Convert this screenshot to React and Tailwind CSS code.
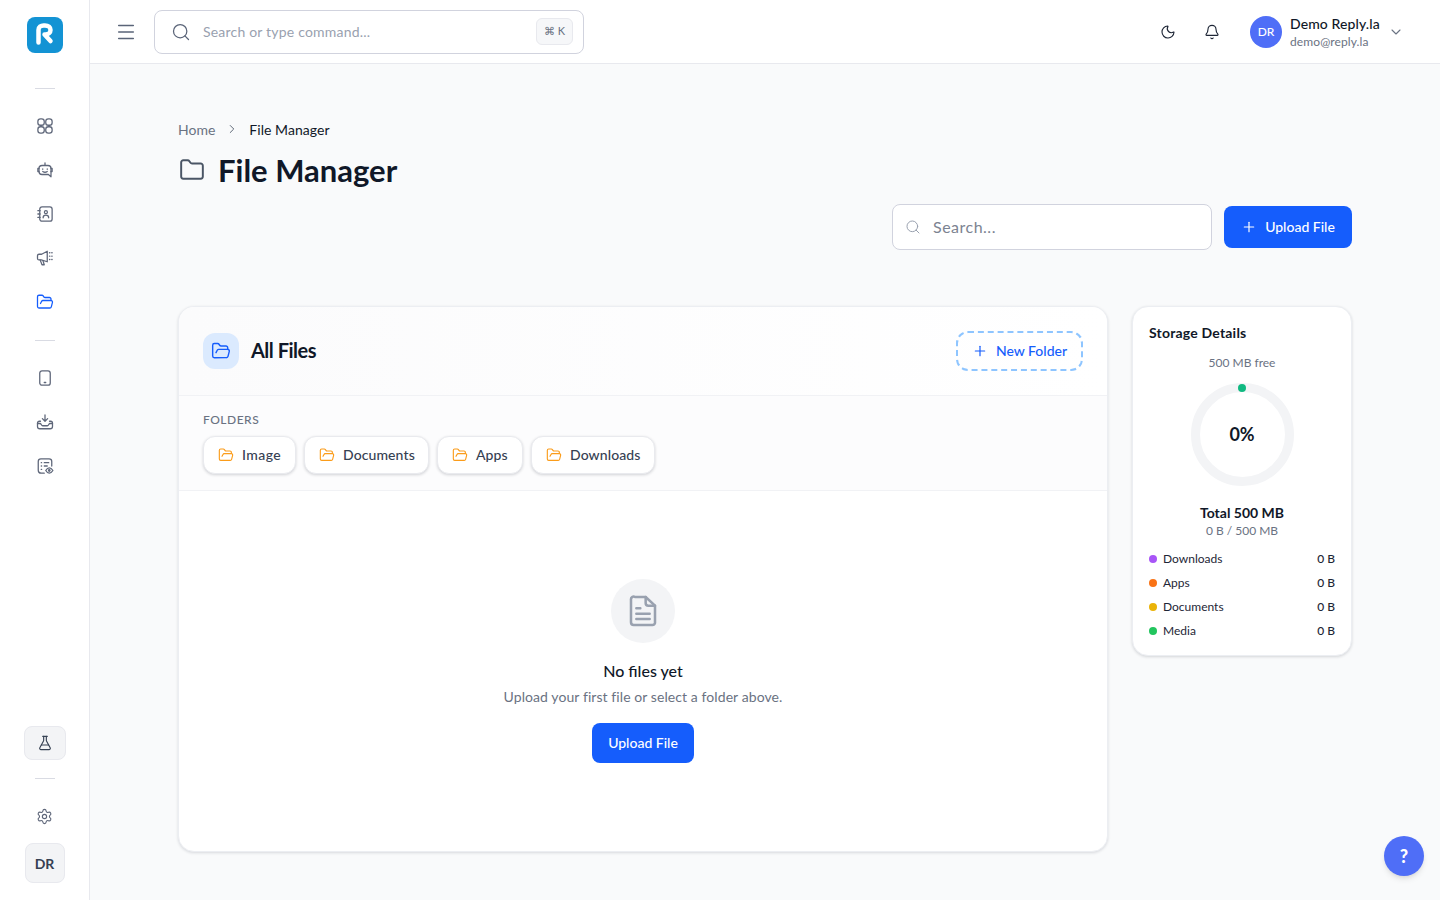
import React from "react";
import { Menu, Search, Moon, Bell, ChevronDown, ChevronRight, Folder, FolderOpen, Plus, FlaskConical, Settings } from "lucide-react";

const S = ({ children, className = "", size = 18, sw = 1.7 }) => (
  <svg width={size} height={size} viewBox="0 0 24 24" fill="none" stroke="currentColor" strokeWidth={sw} strokeLinecap="round" strokeLinejoin="round" className={className}>
    {children}
  </svg>
);

const GridIcon = () => (
  <S><rect x="2.500" y="2.500" width="8.500" height="8.500" rx="3.500" /><rect x="13" y="2.500" width="8.500" height="8.500" rx="3.500" /><rect x="2.500" y="13" width="8.500" height="8.500" rx="3.500" /><rect x="13" y="13" width="8.500" height="8.500" rx="3.500" /></S>
);
const BotIcon = () => (
  <S>
    <path d="M12 2.500v3" />
    <path d="M8 6h8a4 4 0 0 1 4 4v11l-3.500-3H8a4 4 0 0 1-4-4v-4a4 4 0 0 1 4-4Z" />
    <path d="M4 10H2.500v4H4M20 10h1.500v4H20" />
    <path d="M9 10.500v.5M15 10.500v.5M9 14c1.800 1.200 4.200 1.200 6 0" />
  </S>
);
const ContactIcon = () => (
  <S>
    <rect x="5" y="2.500" width="16.500" height="19" rx="3" />
    <path d="M2.500 7.500h3M2.500 12h3M2.500 16.500h3" />
    <circle cx="13.200" cy="9.500" r="2" />
    <path d="M9.500 17c0-2 1.500-3.500 3.700-3.500s3.700 1.500 3.700 3.500" />
  </S>
);
const MegaphoneIcon = () => (
  <S>
    <path d="M15 3v14L7 14.500H4a2 2 0 0 1-2-2v-3.500a2 2 0 0 1 2-2h3.500L15 3Z" />
    <path d="M5.500 14.500L8 21h3l-1.800-5.500" />
    <path d="M18 5h.5M21 5h.5M18 9.500h.5M21 9.500h.5M18 14h.5M21 14h.5" />
  </S>
);
const TabletIcon = () => (
  <S><rect x="5" y="2.500" width="14" height="19" rx="3" /><path d="M11 18h2" /></S>
);
const InboxDown = () => (
  <S>
    <path d="M12 2.500v8M8.500 7.500l3.500 3.500 3.500-3.500" />
    <path d="M6 11H4.500A2.500 2.500 0 0 0 2 13.500V18a3 3 0 0 0 3 3h14a3 3 0 0 0 3-3v-4.500A2.500 2.500 0 0 0 19.500 11H18" />
    <path d="M2 14h3.500c1.500 0 1.500 3 3.500 3h6c2 0 2-3 3.500-3H22" />
  </S>
);
const ListEye = () => (
  <S>
    <path d="M11 21.500H7a4 4 0 0 1-4-4V6a3.500 3.500 0 0 1 3.500-3.500h11A3.500 3.500 0 0 1 21 6v6" />
    <path d="M7 7.500h.5M7 12h.5M7 16.500h.5M11 7.500h6M11 12h4" />
    <path d="M13 18c1.500-2.500 3-3.500 4.700-3.500s3.300 1 4.800 3.500c-1.500 2.500-3 3.500-4.800 3.500S14.500 20.500 13 18Z" />
    <circle cx="17.700" cy="18" r="1" />
  </S>
);
const DocIcon = () => (
  <S size={32} sw={1.9}>
    <path d="M6 1.500h8l7 6.500v13a2 2 0 0 1-2 1.500H5a2 2 0 0 1-2-2v-17a2 2 0 0 1 3-2Z" />
    <path d="M14 1.500v4.500a2 2 0 0 0 2 2h5" />
    <path d="M7 10h3M7 14h10M7 18h10" />
  </S>
);

const NavItem = ({ children, active }) => (
  <div className={`h-11 w-full flex items-center justify-center ${active ? "text-[#155dfc]" : "text-[#5f677a]"}`}>{children}</div>
);
const Rule = () => <div className="w-5 h-px bg-[#d9dbe3]" />;
const T = ({ children }) => <span className="inline-block -translate-y-px">{children}</span>;

const FolderChip = ({ name, w, track = "tracking-[0.1px]" }) => (
  <button className={`h-[38px] ${w} pl-[14px] flex items-center gap-2 bg-white rounded-xl border border-[#e9eaee] shadow-[0_1px_3px_rgba(16,24,40,0.18)] text-[14px] font-medium ${track} text-[#364153]`}>
    <FolderOpen size={16} className="text-[#fb9c1a]" strokeWidth={1.7} />
    <T>{name}</T>
  </button>
);

const Legend = ({ color, name }) => (
  <div className="h-6 flex items-center justify-between text-[12px] text-[#1e2636]">
    <div className="flex items-center gap-[6px]">
      <span className={`w-2 h-2 rounded-full ${color}`} />
      <span>{name}</span>
    </div>
    <span className="font-medium">0 B</span>
  </div>
);

export default function App() {
  return (
    <div className="h-[900px] w-[1440px] overflow-hidden flex bg-[#f9fafb] text-[#101828] relative font-['Lato','Noto_Sans',sans-serif]">
      <aside className="w-[90px] shrink-0 bg-white border-r border-[#e8e9ee] flex flex-col items-center">
        <div className="h-[70px] flex items-start pt-[17px]">
          <svg width="36" height="36" viewBox="0 0 36 36">
            <rect width="36" height="36" rx="8" fill="#1393d4" />
            <path d="M11.500 25.500V13c0-3 2.500-4.500 5-4.500h1.500c3.500 0 5.500 2 5.500 4.500s-2 4.500-5 4.500h-1l6 6.500" fill="none" stroke="#fff" strokeWidth="4.500" strokeLinecap="round" strokeLinejoin="round" />
          </svg>
        </div>
        <div className="mt-[18px]"><Rule /></div>
        <div className="mt-[15px] w-full flex flex-col">
          <NavItem><GridIcon /></NavItem>
          <NavItem><BotIcon /></NavItem>
          <NavItem><ContactIcon /></NavItem>
          <NavItem><MegaphoneIcon /></NavItem>
          <NavItem active><FolderOpen size={18} strokeWidth={1.7} /></NavItem>
        </div>
        <div className="mt-[16px]"><Rule /></div>
        <div className="mt-[15px] w-full flex flex-col">
          <NavItem><TabletIcon /></NavItem>
          <NavItem><InboxDown /></NavItem>
          <NavItem><ListEye /></NavItem>
        </div>
        <div className="mt-auto w-full flex flex-col items-center pb-[17px]">
          <div className="w-[42px] h-[34px] rounded-lg bg-[#f3f4f6] border border-[#e8e9ee] flex items-center justify-center text-[#364153]">
            <FlaskConical size={16} strokeWidth={1.7} />
          </div>
          <div className="mt-[18px]"><Rule /></div>
          <div className="mt-[15px] h-[44px] flex items-center text-[#5f677a]"><Settings size={17} strokeWidth={1.6} /></div>
          <div className="mt-[5px] w-10 h-10 rounded-lg bg-[#f3f4f6] border border-[#e8e9ee] flex items-center justify-center text-[14px] font-bold text-[#364153]">DR</div>
        </div>
      </aside>

      <div className="flex-1 flex flex-col min-w-0">
        <header className="h-16 shrink-0 bg-white border-b border-[#e8e9ee] flex items-center pl-[25px] pr-[36px]">
          <Menu size={22} strokeWidth={1.6} className="text-[#5a6478]" />
          <div className="ml-[17px] w-[430px] h-11 rounded-lg border border-[#d1d3de] bg-white flex items-center pl-[16px] pr-[10px]">
            <Search size={20} strokeWidth={1.5} className="text-[#5a6478]" />
            <span className="ml-[12px] text-[14px] tracking-[0.2px] text-[#99a1af] flex-1">Search or type command...</span>
            <span className="w-[37px] h-[27px] rounded-md bg-[#f6f7f9] border border-[#e8e9ee] flex items-center justify-center text-[11px] text-[#6a7282]">⌘ K</span>
          </div>
          <div className="ml-auto flex items-center text-[#1e2636]">
            <Moon size={16} strokeWidth={1.7} />
            <Bell size={16} strokeWidth={1.7} className="ml-7" />
            <div className="ml-[30px] w-8 h-8 rounded-full bg-[#4f6ef7] flex items-center justify-center text-white text-[12px] font-medium">DR</div>
            <div className="ml-2 flex flex-col w-[90px] translate-y-px">
              <span className="text-[14px] leading-[18px] tracking-[0.1px] font-medium text-[#101828] whitespace-nowrap">Demo Reply.la</span>
              <span className="text-[12px] leading-[17px] tracking-[0.1px] text-[#6a7282] whitespace-nowrap">demo@reply.la</span>
            </div>
            <ChevronDown size={16} strokeWidth={1.6} className="ml-2 text-[#6a7282]" />
          </div>
        </header>

        <main className="flex-1 px-[88px] pt-[56px]">
          <nav className="h-[18px] flex items-center text-[14px]">
            <span className="text-[#6a7282]">Home</span>
            <ChevronRight size={14} strokeWidth={1.5} className="mx-[10px] text-[#4a5565]" />
            <span className="text-[#101828] tracking-[0.05px]">File Manager</span>
          </nav>
          <div className="mt-[14px] h-[36px] flex items-center">
            <Folder size={26} strokeWidth={1.8} className="ml-px text-[#4a5565]" />
            <h1 className="ml-[13px] text-[31px] leading-9 font-bold text-[#101828]">File Manager</h1>
          </div>
          <div className="mt-[16px] flex justify-end items-center gap-3">
            <div className="w-[320px] h-[46px] rounded-lg border border-[#d1d3de] bg-white flex items-center pl-3">
              <Search size={16} strokeWidth={1.5} className="text-[#99a1af]" />
              <span className="ml-[12px] text-[16px] tracking-[0.5px] text-[#7c8391]">Search...</span>
            </div>
            <button className="w-[128px] h-[42px] rounded-lg bg-[#155dfc] text-white flex items-center justify-center gap-2 text-[14px] font-medium">
              <Plus size={16} strokeWidth={1.8} /><T>Upload File</T>
            </button>
          </div>

          <div className="mt-[56px] flex items-start gap-6">
            <section className="w-[930px] h-[546px] bg-white rounded-2xl border border-[#eceef2] shadow-[0_1px_3px_rgba(16,24,40,0.14)] overflow-hidden flex flex-col">
              <div className="h-[89px] shrink-0 px-6 flex items-center justify-between border-b border-[#f1f2f5] bg-gradient-to-r from-[#fbfbfc] to-white">
                <div className="flex items-center gap-3">
                  <div className="w-9 h-9 rounded-xl bg-[#dbeafe] flex items-center justify-center text-[#155dfc]">
                    <FolderOpen size={20} strokeWidth={1.7} />
                  </div>
                  <h2 className="text-[20px] font-bold tracking-[-0.5px] text-[#101828] -translate-y-px">All Files</h2>
                </div>
                <button className="w-[127px] h-10 rounded-xl border-2 border-dashed border-[#8ec5ff] flex items-center justify-center gap-2 text-[14px] font-medium text-[#155dfc]">
                  <Plus size={16} strokeWidth={1.8} /><T>New Folder</T>
                </button>
              </div>
              <div className="h-[95px] shrink-0 px-6 pt-[16px] bg-[#fcfcfd] border-b border-[#f1f2f5]">
                <div className="text-[12px] leading-4 tracking-[0.5px] font-medium text-[#6a7282]">FOLDERS</div>
                <div className="mt-2 flex gap-2">
                  <FolderChip name="Image" w="w-[93px]" track="tracking-[0.4px]" />
                  <FolderChip name="Documents" w="w-[125px]" />
                  <FolderChip name="Apps" w="w-[86px]" />
                  <FolderChip name="Downloads" w="w-[124px]" />
                </div>
              </div>
              <div className="flex-1 flex flex-col items-center pt-[88px]">
                <div className="w-16 h-16 rounded-full bg-[#f3f4f6] flex items-center justify-center text-[#99a1af]">
                  <DocIcon />
                </div>
                <h3 className="mt-[16px] text-[16px] leading-6 font-medium text-[#101828]">No files yet</h3>
                <p className="mt-[4px] text-[14px] leading-5 tracking-[0.08px] text-[#6a7282]">Upload your first file or select a folder above.</p>
                <button className="mt-4 w-[102px] h-10 rounded-lg bg-[#155dfc] text-white text-[14px] font-medium"><T>Upload File</T></button>
              </div>
            </section>

            <aside className="w-[220px] h-[350px] bg-white rounded-2xl border border-[#eceef2] shadow-[0_1px_3px_rgba(16,24,40,0.16)] px-4 pt-[16px]">
              <h3 className="text-[14px] leading-5 tracking-[0.2px] font-bold text-[#101828]">Storage Details</h3>
              <div className="mt-[12px] text-center text-[12px] leading-4 text-[#6a7282]">500 MB free</div>
              <div className="mt-[12px] relative w-[103px] h-[103px] mx-auto">
                <div className="w-full h-full rounded-full border-[9px] border-[#f3f4f6]" />
                <div className="absolute left-[47.5px] top-px w-2 h-2 rounded-full bg-[#10b981]" />
                <div className="absolute inset-0 flex items-center justify-center text-[18px] font-bold text-[#101828]">0%</div>
              </div>
              <div className="mt-[17px] text-center text-[14px] leading-5 font-bold text-[#101828]">Total 500 MB</div>
              <div className="text-center text-[12px] leading-4 text-[#6a7282]">0 B / 500 MB</div>
              <div className="mt-[8px] flex flex-col">
                <Legend color="bg-[#a855f7]" name="Downloads" />
                <Legend color="bg-[#f97316]" name="Apps" />
                <Legend color="bg-[#eab308]" name="Documents" />
                <Legend color="bg-[#22c55e]" name="Media" />
              </div>
            </aside>
          </div>
        </main>
      </div>

      <button className="absolute right-4 bottom-[24px] w-10 h-10 rounded-full bg-[#4f6ef7] text-white text-[18px] font-black shadow-md flex items-center justify-center">?</button>
    </div>
  );
}
